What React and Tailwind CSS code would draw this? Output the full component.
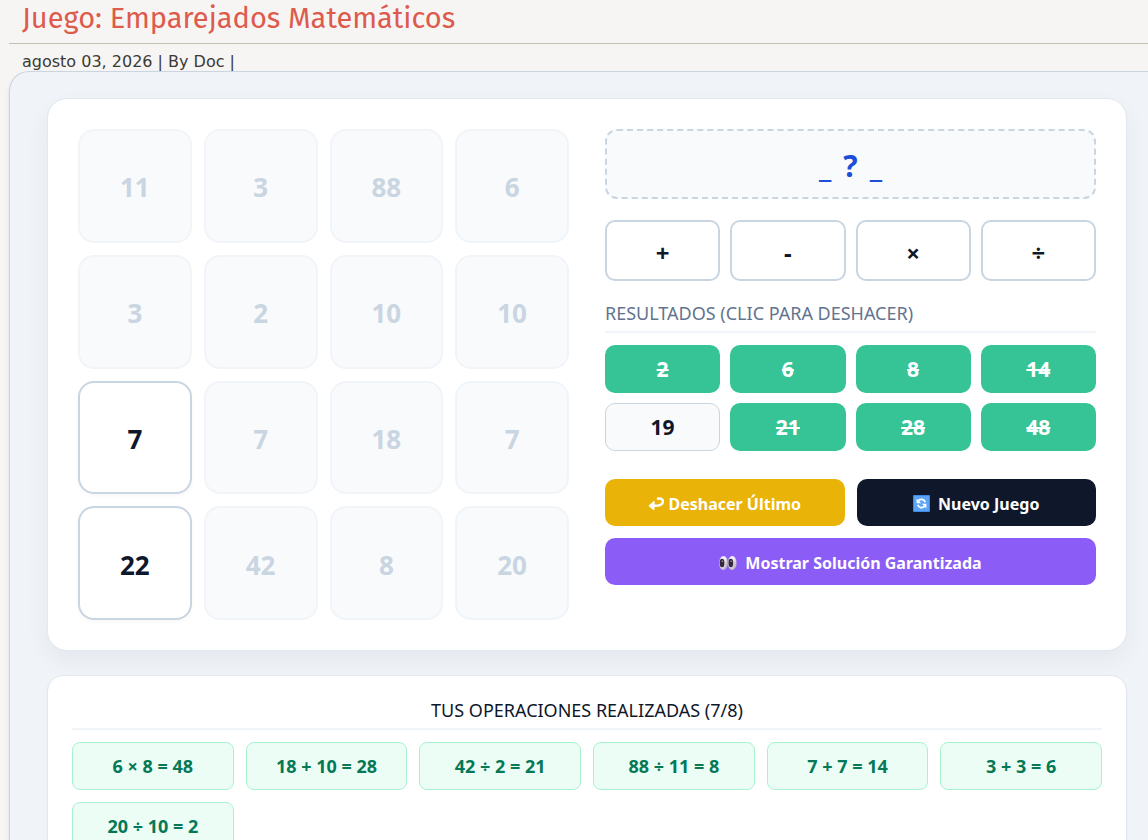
import { useState } from "react";

const tiles = [
    { value: 11, used: true },
    { value: 3, used: true },
    { value: 88, used: true },
    { value: 6, used: true },
    { value: 3, used: true },
    { value: 2, used: true },
    { value: 10, used: true },
    { value: 10, used: true },
    { value: 7, used: false },
    { value: 7, used: true },
    { value: 18, used: true },
    { value: 7, used: true },
    { value: 22, used: false },
    { value: 42, used: true },
    { value: 8, used: true },
    { value: 20, used: true },
];

const operators = ["+", "-", "×", "÷"];

const results = [
    { value: 2, done: true },
    { value: 6, done: true },
    { value: 8, done: true },
    { value: 14, done: true },
    { value: 19, done: false },
    { value: 21, done: true },
    { value: 28, done: true },
    { value: 48, done: true },
];

const operations = [
    "6 × 8 = 48",
    "18 + 10 = 28",
    "42 ÷ 2 = 21",
    "88 ÷ 11 = 8",
    "7 + 7 = 14",
    "3 + 3 = 6",
    "20 ÷ 10 = 2",
];

function UndoIcon() {
    return (
        <svg viewBox="0 0 16 16" className="size-4" fill="none" aria-hidden="true">
            <path d="M10 2.600C13.500 2 15.600 4 14.700 6.600C13.800 9.200 10 10 5 9.700" stroke="#fff" strokeWidth="2.600" strokeLinecap="round" />
            <path d="M1.400 9.700L6 5.800L5.700 13.400Z" fill="#fff" stroke="#fff" strokeWidth="1.400" strokeLinejoin="round" />
        </svg>
    );
}

function RefreshIcon() {
    return (
        <svg viewBox="0 0 17 17" className="size-[17px]" fill="none" aria-hidden="true">
            <rect width="17" height="17" rx="1" fill="#3f8ae6" />
            <rect x="1" y="1" width="15" height="15" rx="1" fill="#5ba3f5" />
            <path d="M5.500 5.600C7.500 3.600 11 4 12.300 7.200" stroke="#fff" strokeWidth="1.700" />
            <path d="M3.600 3.600V8.200H8.200Z" fill="#fff" />
            <path d="M11.500 11.400C9.500 13.400 6 13 4.700 9.800" stroke="#fff" strokeWidth="1.700" />
            <path d="M13.400 13.400V8.800H8.800Z" fill="#fff" />
        </svg>
    );
}

function EyesIcon() {
    return (
        <svg viewBox="0 0 18 16" className="h-4 w-[18px]" aria-hidden="true">
            <defs>
                <linearGradient id="eye" x1="0" y1="0" x2="1" y2="1">
                    <stop offset="0.4" stopColor="#f5eff7" />
                    <stop offset="1" stopColor="#a79aac" />
                </linearGradient>
            </defs>
            <ellipse cx="4.500" cy="8" rx="4.300" ry="7" fill="url(#eye)" />
            <ellipse cx="13.300" cy="8" rx="4.300" ry="7" fill="url(#eye)" />
            <ellipse cx="3" cy="8" rx="2.400" ry="4.200" fill="#342b3a" />
            <ellipse cx="11.800" cy="8" rx="2.400" ry="4.200" fill="#342b3a" />
            <circle cx="3.300" cy="6.300" r="0.800" fill="#a79aac" />
            <circle cx="12.100" cy="6.300" r="0.800" fill="#a79aac" />
        </svg>
    );
}

function NumberTile({ tile, selected, onSelect }) {
    return (
        <button
            type="button"
            disabled={tile.used}
            onClick={onSelect}
            className={`flex aspect-square items-center justify-center rounded-2xl border-2 pt-1 text-[26px] font-bold ${
                tile.used
                    ? "border-slate-100 bg-slate-50 text-slate-300"
                    : selected
                    ? "border-blue-700 bg-blue-50 text-blue-700"
                    : "border-slate-300 bg-white text-slate-900 shadow-[0_2px_4px_rgba(0,0,0,0.03)]"
            }`}
        >
            {tile.value}
        </button>
    );
}

export default function App() {
    const [selected, setSelected] = useState(null);
    const [operator, setOperator] = useState(null);

    return (
        <div className="min-h-screen overflow-x-hidden bg-[#f7f5f3] pl-[9px] font-['Noto_Sans','Open_Sans',sans-serif]">
            <header>
                <h1 className="h-11 border-b border-[#c1c1b5] pl-[13px] font-['Fira_Sans','Noto_Sans',sans-serif] text-[29px] leading-[38px] text-[#dd5b4d]">
                    Juego: Emparejados Matemáticos
                </h1>
                <p className="h-[27px] pt-2 pl-[13px] font-['DejaVu_Sans',sans-serif] text-base leading-5 text-[#3a3a36]">
                    agosto 03, 2026 | By Doc |
                </p>
            </header>

            <main className="rounded-tl-[20px] border-t border-l border-slate-300 bg-[#f0f3f8] pt-[26px] pr-[21px] pb-8 pl-[37px] shadow-md">
                <section className="grid grid-cols-2 gap-9 rounded-[20px] border border-slate-200 bg-white p-[30px] shadow-[0_10px_25px_rgba(0,0,0,0.05)]">
                    <div className="grid grid-cols-4 gap-3">
                        {tiles.map((tile, index) => (
                            <NumberTile
                                key={index}
                                tile={tile}
                                selected={selected === index}
                                onSelect={() => setSelected(index)}
                            />
                        ))}
                    </div>

                    <div className="flex flex-col">
                        <div className="flex h-[70px] items-center justify-center gap-3 rounded-xl border-2 border-dashed border-slate-300 bg-slate-50 pt-0.5 text-[30px] font-bold text-[#1d4ed8]">
                            <span>{selected === null ? "_" : tiles[selected].value}</span>
                            <span>{operator ?? "?"}</span>
                            <span>_</span>
                        </div>

                        <div className="mt-[21px] grid grid-cols-4 gap-[10px]">
                            {operators.map((op) => (
                                <button
                                    key={op}
                                    type="button"
                                    onClick={() => setOperator(op)}
                                    className="flex h-[61px] items-center justify-center rounded-[10px] border-2 border-slate-300 bg-white pt-1 text-2xl font-bold text-slate-900"
                                >
                                    {op}
                                </button>
                            ))}
                        </div>

                        <h2 className="mt-5 h-8 border-b-2 border-slate-100 text-lg leading-6 text-slate-500 uppercase">
                            Resultados (clic para deshacer)
                        </h2>

                        <div className="mt-3 grid grid-cols-4 gap-[10px]">
                            {results.map((result) => (
                                <button
                                    key={result.value}
                                    type="button"
                                    className={`flex h-12 items-center justify-center rounded-[10px] pt-0.5 text-[21px] font-bold ${
                                        result.done
                                            ? "bg-[#36c395] text-white line-through"
                                            : "border border-slate-300 bg-slate-50 text-slate-900"
                                    }`}
                                >
                                    {result.value}
                                </button>
                            ))}
                        </div>

                        <div className="mt-7 grid grid-cols-2 gap-3 text-base font-bold text-white">
                            <button type="button" className="flex h-[47px] items-center justify-center gap-1 rounded-[10px] bg-[#eab308] pt-0.5">
                                <UndoIcon />
                                Deshacer Último
                            </button>
                            <button type="button" className="flex h-[47px] items-center justify-center gap-2 rounded-[10px] bg-slate-900 pt-0.5">
                                <RefreshIcon />
                                Nuevo Juego
                            </button>
                            <button type="button" className="col-span-2 flex h-[47px] items-center justify-center gap-2 rounded-[10px] bg-[#8b5cf6] pt-0.5">
                                <EyesIcon />
                                Mostrar Solución Garantizada
                            </button>
                        </div>
                    </div>
                </section>

                <section className="mt-6 rounded-2xl border border-slate-200 bg-white p-6 shadow-xs">
                    <h2 className="h-[30px] border-b-2 border-slate-100 text-center text-lg leading-5 text-slate-900 uppercase">
                        Tus operaciones realizadas (7/8)
                    </h2>
                    <ul className="mt-3 grid grid-cols-6 gap-3">
                        {operations.map((operation) => (
                            <li
                                key={operation}
                                className="flex h-12 items-center justify-center rounded-lg border border-[#a7f3d0] bg-[#ecfdf5] text-lg font-bold text-[#047857]"
                            >
                                {operation}
                            </li>
                        ))}
                    </ul>
                </section>
            </main>
        </div>
    );
}
